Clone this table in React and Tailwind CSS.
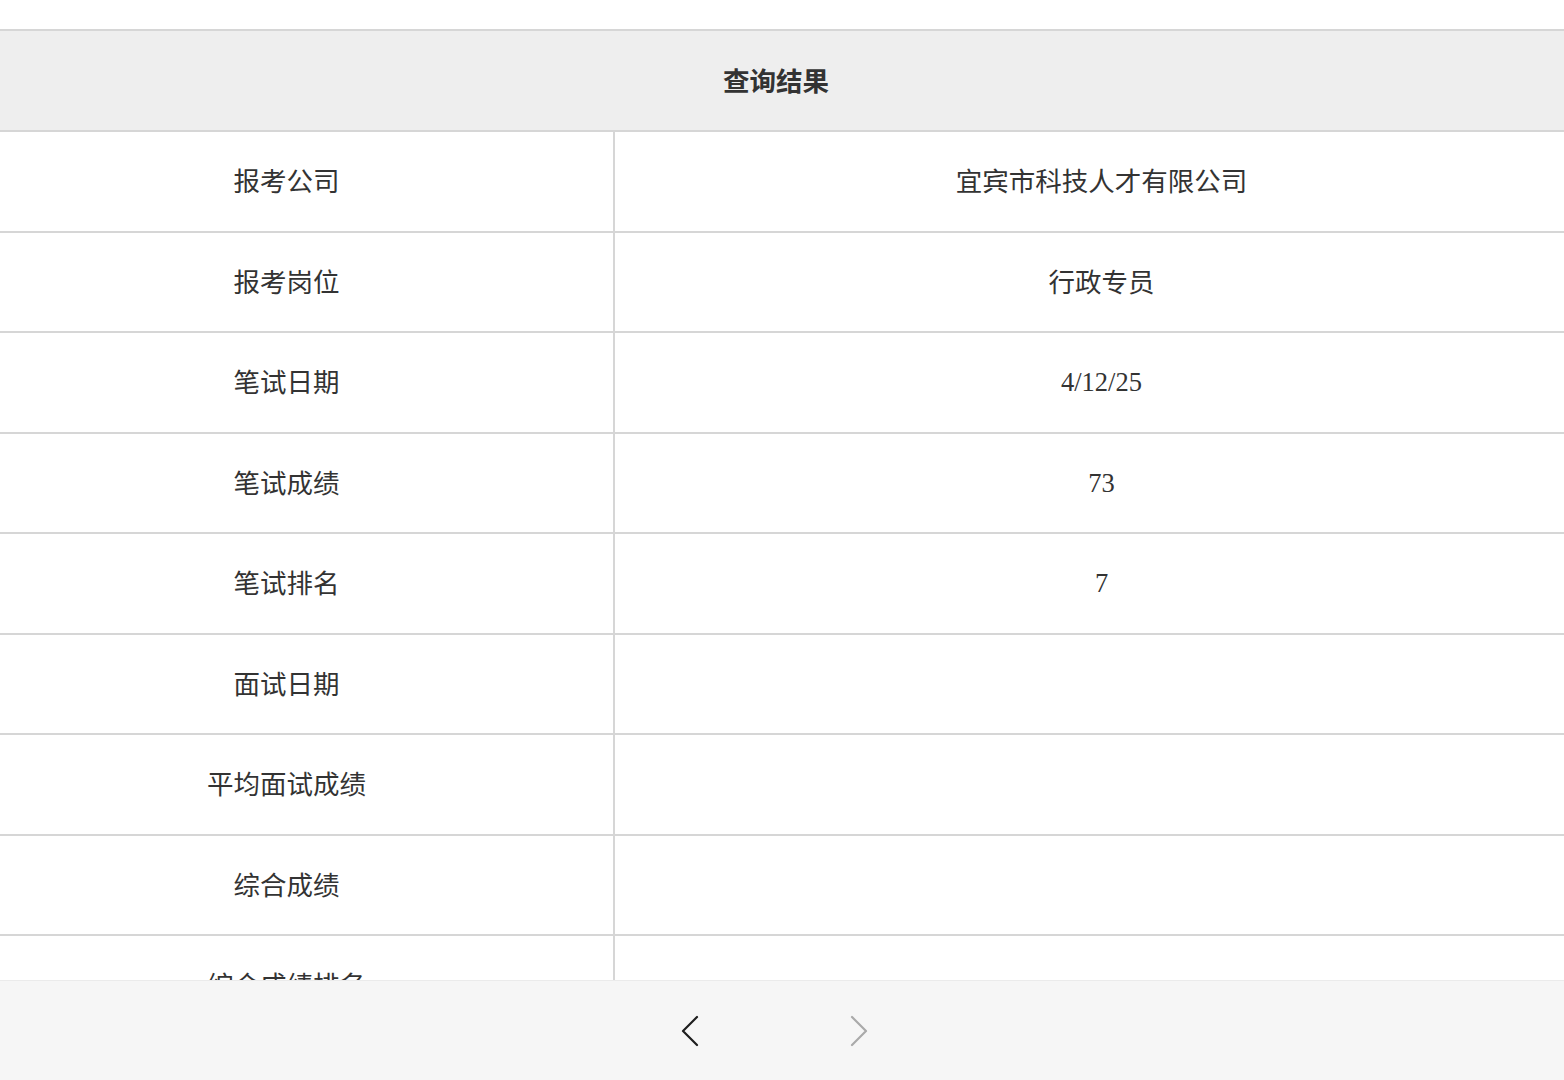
import React from "react";

const rows = [
  ["报考公司", "宜宾市科技人才有限公司"],
  ["报考岗位", "行政专员"],
  ["笔试日期", "4/12/25"],
  ["笔试成绩", "73"],
  ["笔试排名", "7"],
  ["面试日期", ""],
  ["平均面试成绩", ""],
  ["综合成绩", ""],
  ["综合成绩排名", ""],
];

const cjk = { fontFamily: '"Noto Sans CJK SC", "Noto Sans", sans-serif' };
const serif = { fontFamily: '"Liberation Serif", "Noto Sans CJK SC", serif' };

export default function App() {
  return (
    <div className="relative w-[1564px] h-[1080px] overflow-hidden bg-white text-[#333]">
      <div className="h-[29px]" />
      <div className="ml-[-40px] w-[1628px]">
        <div
          className="h-[103px] border-t-2 border-b-2 border-[#d6d6d6] bg-[#eeeeee] flex items-center justify-center text-[26.5px] font-bold text-[#333]"
          style={cjk}
        >
          <span className="-translate-y-[1px] translate-x-[2px]">查询结果</span>
        </div>
        {rows.map(([k, v]) => {
          const isNum = /^[0-9/]+$/.test(v);
          return (
            <div key={k} className="flex h-[100.5px] border-b-2 border-[#d6d6d6]">
              <div
                className="w-[655px] shrink-0 border-r-2 border-[#d6d6d6] flex items-center justify-center text-[26.5px] text-[#333]"
                style={cjk}
              >
                <span className="-translate-y-[1px]">{k}</span>
              </div>
              <div
                className="flex-1 flex items-center justify-center text-[26.5px] text-[#333]"
                style={isNum ? serif : cjk}
              >
                <span className={isNum ? "translate-y-[1px]" : "-translate-y-[1px]"}>{v}</span>
              </div>
            </div>
          );
        })}
      </div>
      <div className="absolute left-0 right-0 bottom-0 h-[100px] bg-[#f6f6f6] border-t border-[#ebebeb]">
        <svg className="absolute left-[680px] top-[34px]" width="20" height="32" viewBox="0 0 20 32">
          <polyline points="17,2 3,16 17,30" fill="none" stroke="#1f1f1f" strokeWidth="2.2" strokeLinecap="round" strokeLinejoin="round" />
        </svg>
        <svg className="absolute left-[849px] top-[34px]" width="20" height="32" viewBox="0 0 20 32">
          <polyline points="3,2 17,16 3,30" fill="none" stroke="#aaaaaa" strokeWidth="2.2" strokeLinecap="round" strokeLinejoin="round" />
        </svg>
      </div>
    </div>
  );
}
